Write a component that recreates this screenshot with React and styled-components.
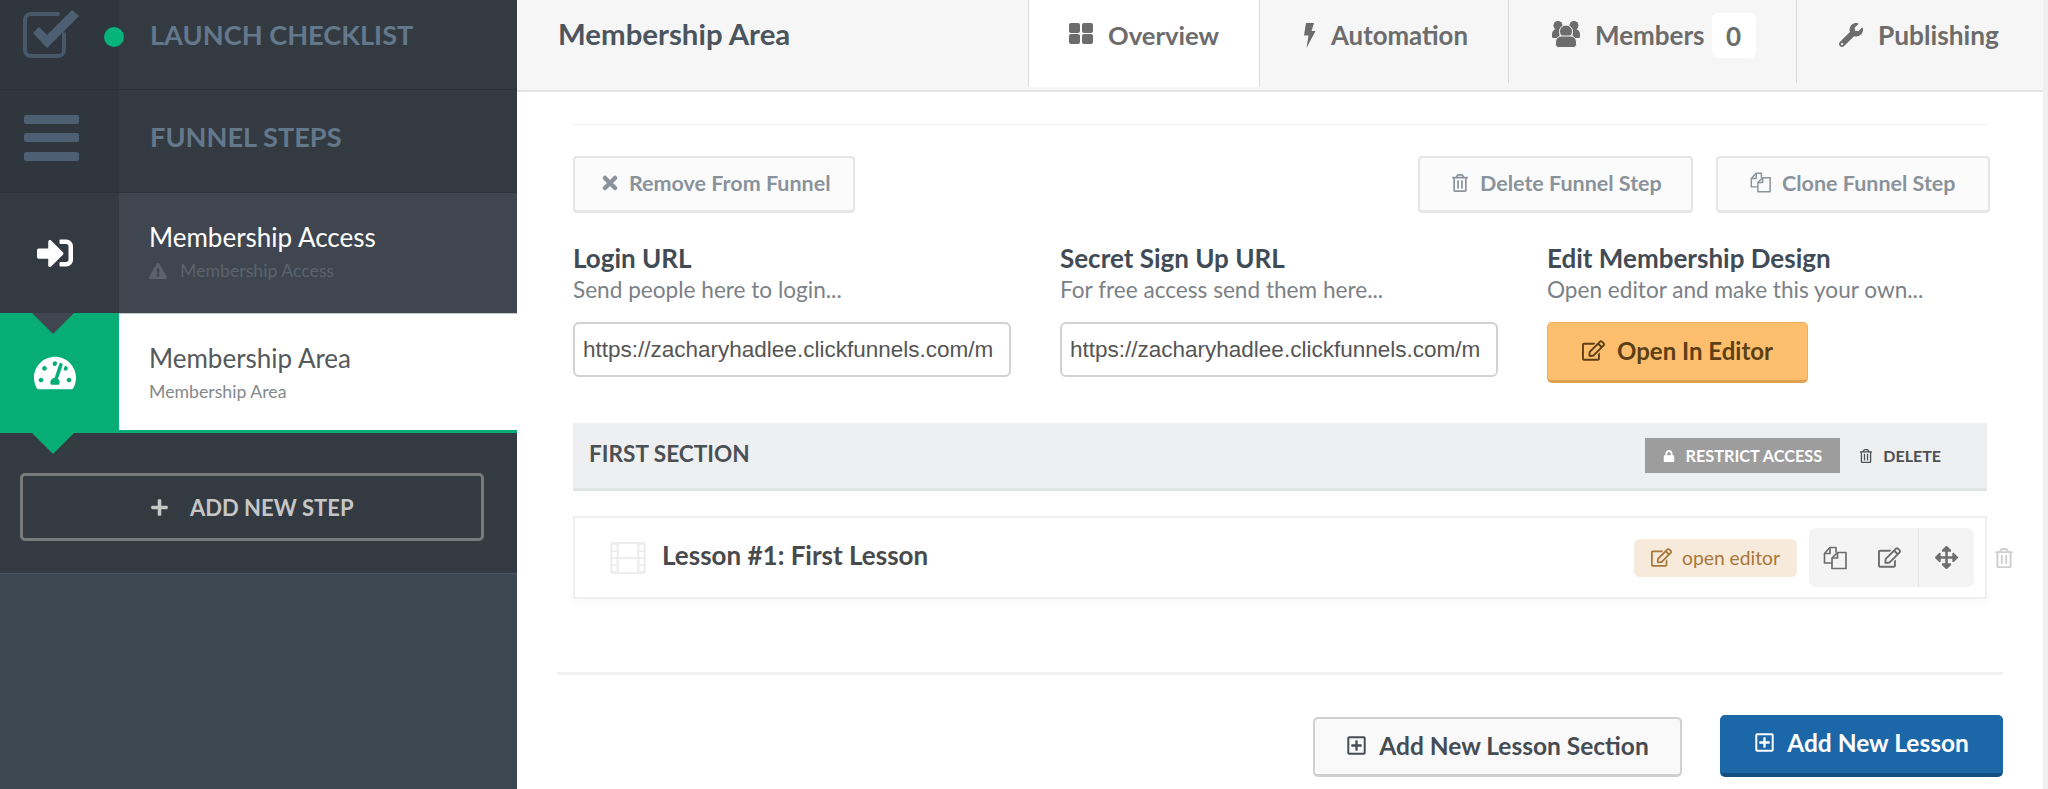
import React from 'react';
import styled, { createGlobalStyle } from 'styled-components';
import {
  FaWrench, FaRegTrashAlt, FaRegEdit, FaLock, FaArrowsAlt, FaPlus, FaRegPlusSquare,
  FaExclamationTriangle, FaSignInAlt, FaTachometerAlt,
} from 'react-icons/fa';

const GlobalStyle = createGlobalStyle`
  html, body { margin: 0; padding: 0; height: 100%; overflow: hidden; background: #fff; }
  body { font-family: "Lato", "Open Sans", sans-serif; }
  * { box-sizing: border-box; }
`;

const CheckIcon = () => (
  <svg width="60" height="50" viewBox="0 0 60 50">
    <path d="M42 25v16a6 6 0 0 1-6 6H9a6 6 0 0 1-6-6V11a6 6 0 0 1 6-6h27" fill="none" stroke="#46586a" strokeWidth="4" strokeLinecap="round" />
    <path d="M11 24l6-6 8 8L50 1l7 6-32 32z" fill="#4d6073" />
  </svg>
);

const BarsIcon = () => (
  <svg width="56" height="46" viewBox="0 0 56 46">
    <rect x="0" y="0" width="55" height="9" rx="2" fill="#4d6073" />
    <rect x="0" y="18" width="55" height="9" rx="2" fill="#4d6073" />
    <rect x="0" y="37" width="55" height="9" rx="2" fill="#4d6073" />
  </svg>
);

const GridIcon = () => (
  <svg width="24" height="21" viewBox="0 0 24 21" fill="currentColor">
    <rect x="0" y="0" width="11" height="10" rx="2" />
    <rect x="13" y="0" width="11" height="10" rx="2" />
    <rect x="0" y="11" width="11" height="10" rx="2" />
    <rect x="13" y="11" width="11" height="10" rx="2" />
  </svg>
);

const BoltIcon = () => (
  <svg width="13" height="25" viewBox="0 0 13 25" fill="currentColor">
    <path d="M3 0h8L8.500 8H12.500L3.500 25l2-12.500H1z" />
  </svg>
);

const UsersIcon = () => (
  <svg width="28" height="27" viewBox="0 0 28 27" fill="currentColor">
    <circle cx="6" cy="4.500" r="4.500" />
    <circle cx="22" cy="4.500" r="4.500" />
    <path d="M0 13a5 5 0 0 1 5-5h2.500v9H1.500A1.500 1.500 0 0 1 0 15.500z" />
    <path d="M28 13a5 5 0 0 0-5-5h-2.500v9h6A1.500 1.500 0 0 0 28 15.500z" />
    <circle cx="14" cy="10.500" r="6.500" stroke="#f6f6f6" strokeWidth="1" />
    <path d="M3.500 21a6 6 0 0 1 6-6h9a6 6 0 0 1 6 6v2.500a3 3 0 0 1-3 3h-15a3 3 0 0 1-3-3z" stroke="#f6f6f6" strokeWidth="1" />
  </svg>
);

const CrossIcon = () => (
  <svg width="16" height="16" viewBox="0 0 16 16" stroke="currentColor" strokeWidth="4.500" strokeLinecap="round">
    <path d="M3 3l10 10M13 3L3 13" />
  </svg>
);

const CopyIcon = ({ size = 24 }) => (
  <svg width={size} height={size} viewBox="0 0 24 24" fill="none" stroke="currentColor" strokeWidth="1.7" strokeLinejoin="round">
    <path d="M9 17H1.500V7.500L7 1.500h6v5" />
    <path d="M1.500 7.500H7V1.500" />
    <path d="M9 12l5.500-5.500h8.500V22.500H9z" />
    <path d="M9 12h5.500V6.500" />
  </svg>
);

const FilmIcon = () => (
  <svg width="36" height="32" viewBox="0 0 36 32">
    <rect x="0" y="0" width="36" height="32" rx="3" fill="#eeeeee" />
    <rect x="9" y="2" width="18" height="13" fill="#fff" />
    <rect x="9" y="17" width="18" height="13" fill="#fff" />
    <g fill="#fff">
      <rect x="2.500" y="3" width="4" height="5" />
      <rect x="2.500" y="10" width="4" height="5" />
      <rect x="2.500" y="17" width="4" height="5" />
      <rect x="2.500" y="24" width="4" height="5" />
      <rect x="29.500" y="3" width="4" height="5" />
      <rect x="29.500" y="10" width="4" height="5" />
      <rect x="29.500" y="17" width="4" height="5" />
      <rect x="29.500" y="24" width="4" height="5" />
    </g>
  </svg>
);

const Page = styled.div`
  display: flex;
  width: 2048px;
  height: 789px;
  overflow: hidden;
`;

const Sidebar = styled.aside`
  width: 517px;
  flex: none;
  display: flex;
  flex-direction: column;
  background: #3c4751;
`;

const NavRow = styled.div`
  position: relative;
  display: flex;
  flex: none;
  height: ${p => p.$h}px;
  background: #343a41;
  border-bottom: ${p => (p.$line ? '1px solid #2d3238' : 'none')};
`;

const Rail = styled.div`
  width: 119px;
  flex: none;
  display: flex;
  align-items: center;
  justify-content: center;
  color: #fff;
  background: ${p => p.$bg || '#30363d'};
  padding: 0 ${p => p.$pr || 0}px ${p => p.$pb || 0}px 0;
  font-size: ${p => p.$size || 40}px;
`;

const NavLabel = styled.div`
  flex: 1;
  display: flex;
  align-items: center;
  padding: 0 0 ${p => p.$pb}px 31px;
  color: #64788c;
  font-size: 27.2px;
  font-weight: 700;
`;

const StatusDot = styled.span`
  position: absolute;
  left: 104px;
  top: 27px;
  width: 20px;
  height: 20px;
  border-radius: 50%;
  background: #06b37a;
`;

const StepBody = styled.div`
  flex: 1;
  display: flex;
  flex-direction: column;
  padding: 29px 0 0 30px;
  background: ${p => (p.$active ? '#fff' : '#3f4650')};
  border-top: ${p => (p.$active ? '1px solid #c5c9cc' : 'none')};
  border-bottom: ${p => (p.$active ? '3px solid #06ae75' : 'none')};
`;

const StepName = styled.div`
  font-size: 26px;
  line-height: 30px;
  color: ${p => (p.$active ? '#55595c' : '#fff')};
`;

const StepSub = styled.div`
  display: flex;
  align-items: center;
  gap: 13px;
  margin-top: 8px;
  font-size: 17.7px;
  line-height: 22px;
  color: ${p => (p.$active ? '#85888a' : '#5b636d')};
  svg { font-size: 18px; }
`;

const Pointer = styled.span`
  position: absolute;
  left: 32px;
  width: 0;
  height: 0;
  border-left: 21px solid transparent;
  border-right: 21px solid transparent;
  border-top: 21px solid ${p => p.$color};
  z-index: 2;
  ${p => (p.$below ? 'top: 100%;' : 'top: 0;')}
`;

const AddArea = styled.div`
  flex: none;
  height: 141px;
  padding: 40px 33px 0 20px;
  background: #343a41;
  border-bottom: 1px solid #4a5663;
`;

const AddStep = styled.div`
  height: 68px;
  display: flex;
  align-items: center;
  gap: 21px;
  padding-left: 127px;
  border: 3px solid #787a7c;
  border-radius: 5px;
  color: #c6c6c6;
  font-size: 22px;
  font-weight: 700;
  svg { font-size: 19px; }
`;

const Main = styled.main`
  flex: 1;
  display: flex;
  flex-direction: column;
  min-width: 0;
  border-right: 5px solid #eeeff1;
`;

const TopBar = styled.header`
  flex: none;
  height: 92px;
  display: flex;
  background: #f6f6f6;
  border-bottom: 2px solid #e3e3e3;
`;

const Title = styled.h1`
  flex: 1;
  margin: 0;
  padding: 17px 0 0 41px;
  font-size: 29.4px;
  line-height: 34px;
  font-weight: 700;
  color: #4c555d;
`;

const Tab = styled.div`
  position: relative;
  flex: none;
  width: ${p => p.$w}px;
  height: ${p => (p.$active ? 87 : 83)}px;
  display: flex;
  align-items: flex-start;
  padding: 18px 0 0 ${p => p.$pl}px;
  gap: 15px;
  background: ${p => (p.$active ? '#fff' : 'transparent')};
  border-right: ${p => (p.$last ? 'none' : '1px solid #dcdcdc')};
  border-left: ${p => (p.$active ? '1px solid #dcdcdc' : 'none')};
  color: #6c6c6c;
  font-size: ${p => p.$font}px;
  line-height: 34px;
  font-weight: 700;
  svg { flex: none; margin-top: ${p => p.$iconTop}px; }
`;

const CountBadge = styled.span`
  width: 44px;
  height: 45px;
  margin: -5px 0 0 -8px;
  display: flex;
  align-items: center;
  justify-content: center;
  background: #fff;
  border-radius: 6px;
`;

const Content = styled.div`
  flex: 1;
  padding: 32px 56px 0;
`;

const Rule = styled.hr`
  margin: 0;
  border: 0;
  border-top: 1px solid #f0f0f0;
`;

const ActionBar = styled.div`
  display: flex;
  gap: 23px;
  margin: 31px -3px 0 0;
`;

const GhostButton = styled.button`
  width: ${p => p.$w}px;
  height: 57px;
  margin-right: ${p => (p.$push ? 'auto' : 0)};
  display: flex;
  align-items: center;
  gap: 11px;
  padding: 0 0 3px ${p => p.$pl}px;
  background: #fbfbfb;
  border: 2px solid #e4e5e6;
  border-bottom-width: 3px;
  border-radius: 4px;
  font-family: inherit;
  font-size: 21.5px;
  font-weight: 700;
  color: #8a939b;
  svg { flex: none; font-size: 18px; }
`;

const Fields = styled.div`
  display: grid;
  grid-template-columns: repeat(3, 438px);
  column-gap: 49px;
  margin-top: 30px;
`;

const FieldTitle = styled.div`
  font-size: 26px;
  line-height: 30px;
  font-weight: 700;
  color: #414b55;
`;

const FieldHint = styled.div`
  margin-top: 4px;
  font-size: 22.6px;
  line-height: 26px;
  color: #7b8186;
`;

const UrlInput = styled.input`
  display: block;
  width: 438px;
  height: 55px;
  margin-top: 19px;
  padding: 0 8px;
  border: 2px solid #d2d2d2;
  border-radius: 6px;
  background: #fff;
  font-family: "Liberation Sans", Arial, sans-serif;
  font-size: 22.5px;
  color: #555;
  outline: none;
`;

const EditorButton = styled.button`
  width: 261px;
  height: 61px;
  margin-top: 19px;
  display: flex;
  align-items: center;
  justify-content: center;
  gap: 12px;
  padding: 0 0 2px;
  background: #fdbf6d;
  border: 1px solid #eead5b;
  border-bottom: 3px solid #dfa052;
  border-radius: 5px;
  font-family: inherit;
  font-size: 24px;
  font-weight: 700;
  color: #5d3f16;
  svg { font-size: 23px; }
`;

const SectionHead = styled.div`
  height: 68px;
  margin-top: 40px;
  display: flex;
  align-items: center;
  padding: 0 46px 0 16px;
  background: #eeeff1;
  border-bottom: 3px solid #e0e3e4;
`;

const SectionName = styled.div`
  flex: 1;
  font-size: 22.6px;
  font-weight: 700;
  color: #4b5055;
  margin-bottom: 4px;
`;

const RestrictButton = styled.div`
  width: 195px;
  height: 35px;
  display: flex;
  align-items: center;
  justify-content: center;
  gap: 10px;
  background: #9d9d9d;
  color: #fff;
  font-size: 16.3px;
  font-weight: 700;
  svg { font-size: 12px; }
`;

const DeleteLink = styled.div`
  display: flex;
  align-items: center;
  gap: 10px;
  margin-left: 19px;
  color: #4b5055;
  font-size: 16px;
  font-weight: 700;
  svg { font-size: 14px; }
`;

const LessonRow = styled.div`
  display: flex;
  align-items: center;
  margin: 25px -27px 0 0;
`;

const LessonCard = styled.div`
  flex: 1;
  height: 83px;
  display: flex;
  align-items: center;
  padding: 0 11px 0 35px;
  border: 2px solid #f0f0f0;
  box-shadow: 0 4px 8px rgba(0, 0, 0, 0.03);
`;

const LessonName = styled.div`
  flex: 1;
  margin: 0 0 5px 16px;
  font-size: 26px;
  font-weight: 700;
  color: #484a4c;
`;

const OpenEditor = styled.div`
  width: 163px;
  height: 38px;
  display: flex;
  align-items: center;
  justify-content: center;
  gap: 10px;
  background: #f7eada;
  border-radius: 6px;
  color: #a8773a;
  font-size: 19.3px;
  svg { font-size: 21px; }
`;

const ToolGroup = styled.div`
  width: 165px;
  height: 59px;
  margin-left: 12px;
  display: flex;
  background: #f4f4f4;
  border-radius: 7px;
  color: #6e6e6e;
`;

const ToolCell = styled.div`
  flex: ${p => (p.$grow ? 1 : 'none')};
  width: ${p => (p.$grow ? 'auto' : `${p.$w}px`)};
  display: flex;
  align-items: center;
  justify-content: center;
  border-left: ${p => (p.$divider ? '1px solid #e6e6e6' : 'none')};
  font-size: 23px;
`;

const RowTrash = styled.div`
  width: 27px;
  display: flex;
  justify-content: flex-end;
  color: #cfcfcf;
  font-size: 20px;
`;

const BottomRule = styled.hr`
  margin: 73px -16px 0;
  border: 0;
  border-top: 3px solid #f0f0f0;
`;

const Footer = styled.div`
  display: flex;
  justify-content: flex-end;
  align-items: flex-start;
  gap: 38px;
  margin: 40px -16px 0 0;
`;

const FootButton = styled.button`
  width: ${p => p.$w}px;
  height: ${p => (p.$primary ? 62 : 60)}px;
  margin-top: ${p => (p.$primary ? 0 : 2)}px;
  display: flex;
  align-items: center;
  justify-content: center;
  gap: 12px;
  padding: 0 0 ${p => (p.$primary ? 5 : 2)}px;
  background: ${p => (p.$primary ? '#1c67a8' : '#f9f9f9')};
  border: ${p => (p.$primary ? '1px solid #1c67a8' : '2px solid #d0d0d0')};
  border-bottom: ${p => (p.$primary ? '4px solid #154e80' : '3px solid #cfcfcf')};
  border-radius: 5px;
  font-family: inherit;
  font-size: 24.5px;
  font-weight: 700;
  color: ${p => (p.$primary ? '#fff' : '#454c54')};
  svg { font-size: 21px; }
`;

const tabs = [
  { name: 'Overview', icon: <GridIcon />, w: 232, pl: 40, font: 25.6, iconTop: 5, active: true },
  { name: 'Automation', icon: <BoltIcon />, w: 249, pl: 43, font: 25.8, iconTop: 5 },
  { name: 'Members', icon: <UsersIcon />, w: 288, pl: 43, font: 26, iconTop: 3, badge: 0 },
  { name: 'Publishing', icon: <FaWrench size={24} />, w: 246, pl: 42, font: 26.3, iconTop: 5, last: true },
];

const App = () => {
  return (
    <Page>
      <GlobalStyle />
      <Sidebar>
        <NavRow $h={90} $line>
          <Rail $pb={22} $pr={15}><CheckIcon /></Rail>
          <StatusDot />
          <NavLabel $pb={20}>LAUNCH CHECKLIST</NavLabel>
        </NavRow>
        <NavRow $h={103} $line>
          <Rail $pr={15} $pb={6}><BarsIcon /></Rail>
          <NavLabel $pb={10}>FUNNEL STEPS</NavLabel>
        </NavRow>
        <NavRow $h={120}>
          <Rail $size={36} $pr={10} $bg="#343a41"><FaSignInAlt /></Rail>
          <StepBody>
            <StepName>Membership Access</StepName>
            <StepSub><FaExclamationTriangle />Membership Access</StepSub>
          </StepBody>
        </NavRow>
        <NavRow $h={120}>
          <Pointer $color="#3f4650" />
          <Rail $size={42} $pr={10} $bg="#06ae75"><FaTachometerAlt /></Rail>
          <StepBody $active>
            <StepName $active>Membership Area</StepName>
            <StepSub $active>Membership Area</StepSub>
          </StepBody>
          <Pointer $color="#06ae75" $below />
        </NavRow>
        <AddArea>
          <AddStep><FaPlus />ADD NEW STEP</AddStep>
        </AddArea>
      </Sidebar>

      <Main>
        <TopBar>
          <Title>Membership Area</Title>
          {tabs.map(t => (
            <Tab key={t.name} $w={t.w} $pl={t.pl} $font={t.font} $iconTop={t.iconTop} $active={t.active} $last={t.last}>
              {t.icon}
              {t.name}
              {t.badge !== undefined && <CountBadge>{t.badge}</CountBadge>}
            </Tab>
          ))}
        </TopBar>

        <Content>
          <Rule />
          <ActionBar>
            <GhostButton $w={282} $pl={27} $push><CrossIcon />Remove From Funnel</GhostButton>
            <GhostButton $w={275} $pl={31}><FaRegTrashAlt />Delete Funnel Step</GhostButton>
            <GhostButton $w={274} $pl={32}><CopyIcon size={21} />Clone Funnel Step</GhostButton>
          </ActionBar>

          <Fields>
            <div>
              <FieldTitle>Login URL</FieldTitle>
              <FieldHint>Send people here to login...</FieldHint>
              <UrlInput readOnly value="https://zacharyhadlee.clickfunnels.com/m" />
            </div>
            <div>
              <FieldTitle>Secret Sign Up URL</FieldTitle>
              <FieldHint>For free access send them here...</FieldHint>
              <UrlInput readOnly value="https://zacharyhadlee.clickfunnels.com/m" />
            </div>
            <div>
              <FieldTitle>Edit Membership Design</FieldTitle>
              <FieldHint>Open editor and make this your own...</FieldHint>
              <EditorButton><FaRegEdit />Open In Editor</EditorButton>
            </div>
          </Fields>

          <SectionHead>
            <SectionName>FIRST SECTION</SectionName>
            <RestrictButton><FaLock />RESTRICT ACCESS</RestrictButton>
            <DeleteLink><FaRegTrashAlt />DELETE</DeleteLink>
          </SectionHead>

          <LessonRow>
            <LessonCard>
              <FilmIcon />
              <LessonName>Lesson #1: First Lesson</LessonName>
              <OpenEditor><FaRegEdit />open editor</OpenEditor>
              <ToolGroup>
                <ToolCell $w={52}><CopyIcon /></ToolCell>
                <ToolCell $grow><FaRegEdit /></ToolCell>
                <ToolCell $w={56} $divider><FaArrowsAlt /></ToolCell>
              </ToolGroup>
            </LessonCard>
            <RowTrash><FaRegTrashAlt /></RowTrash>
          </LessonRow>

          <BottomRule />
          <Footer>
            <FootButton $w={369}><FaRegPlusSquare />Add New Lesson Section</FootButton>
            <FootButton $w={283} $primary><FaRegPlusSquare />Add New Lesson</FootButton>
          </Footer>
        </Content>
      </Main>
    </Page>
  );
};

export default App;
